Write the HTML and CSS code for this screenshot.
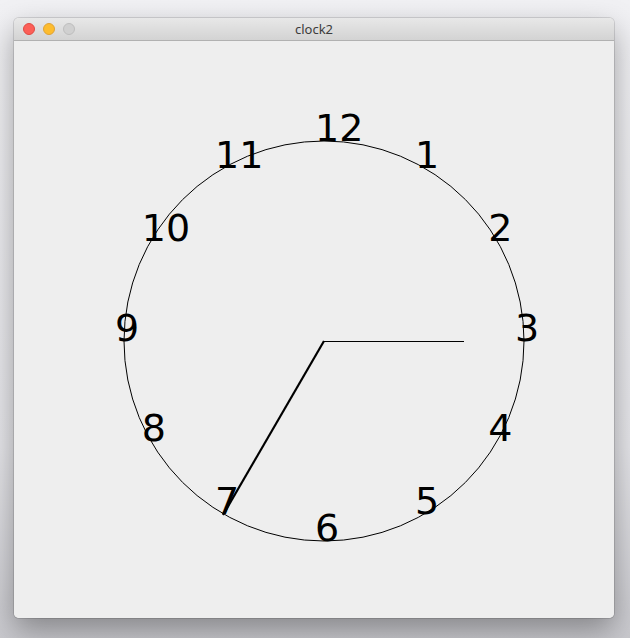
FILE: index.html
```html
<!DOCTYPE html>
<html>
<head>
<meta charset="utf-8">
<link rel="stylesheet" href="styles.css">
</head>
<body>
<div class="window">
  <div class="titlebar">
    <div class="lights">
      <span class="light red"></span>
      <span class="light yellow"></span>
      <span class="light gray"></span>
    </div>
    <div class="title">clock2</div>
  </div>
  <div class="content">
    <svg class="clock" width="600" height="577" viewBox="0 0 600 577">
      <circle cx="310" cy="300" r="200" fill="none" stroke="#000" stroke-width="1"/>
      <line class="crisp" x1="310" y1="300.5" x2="450" y2="300.5" stroke="#000" stroke-width="1"/>
      <line x1="310" y1="300" x2="209" y2="474" stroke="#000" stroke-width="2.2"/>
      <g class="nums">
        <text x="301" y="100">12</text>
        <text x="401" y="126.8">1</text>
        <text x="474.2" y="200">2</text>
        <text x="501" y="300">3</text>
        <text x="474.2" y="400">4</text>
        <text x="401" y="473.2">5</text>
        <text x="301" y="500">6</text>
        <text x="201" y="473.2">7</text>
        <text x="127.8" y="400">8</text>
        <text x="101" y="300">9</text>
        <text x="127.8" y="200">10</text>
        <text x="201" y="126.8">11</text>
      </g>
    </svg>
  </div>
</div>
</body>
</html>
```

FILE: styles.css
```css
html, body {
  margin: 0;
  padding: 0;
}
body {
  width: 630px;
  height: 638px;
  overflow: hidden;
  background: linear-gradient(#f1f1f4, #e6e6ea 70%, #c9c9ce);
  padding-top: 18px;
  padding-left: 14px;
  box-sizing: border-box;
}
.window {
  width: 600px;
  height: 600px;
  border-radius: 5px;
  overflow: hidden;
  box-shadow: 0 0 0 1px rgba(0,0,0,0.12), 0 12px 30px rgba(0,0,0,0.35);
  display: flex;
  flex-direction: column;
  background: #eeeeee;
}
.titlebar {
  height: 22px;
  flex: none;
  background: linear-gradient(#e8e8e8, #d3d3d3);
  border-bottom: 1px solid #b1b1b1;
  display: flex;
  align-items: center;
  position: relative;
}
.lights {
  display: flex;
  gap: 8px;
  padding-left: 9px;
}
.light {
  width: 12px;
  height: 12px;
  border-radius: 50%;
  box-sizing: border-box;
}
.red { background: #fc5f57; border: 1px solid #de4a43; }
.yellow { background: #fdbc2e; border: 1px solid #dea236; }
.gray { background: #d0d0d0; border: 1px solid #bdbdbd; }
.title {
  position: absolute;
  left: 0;
  right: 0;
  top: 0;
  line-height: 22px;
  text-align: center;
  font-family: "Noto Sans", "Liberation Sans", sans-serif;
  font-size: 13px;
  color: #3c3c3c;
  pointer-events: none;
}
.content {
  flex: 1;
  background: #eeeeee;
}
.clock {
  display: block;
}
.crisp {
  shape-rendering: crispEdges;
}
.nums text {
  font-family: "DejaVu Sans", sans-serif;
  font-size: 38px;
  fill: #000;
}
```
